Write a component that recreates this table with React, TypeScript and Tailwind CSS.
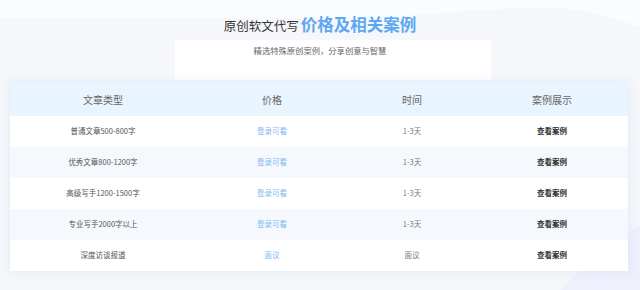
import React from "react";

const rows = [
  { type: "普通文章500-800字", price: "登录可看", time: "1-3天" },
  { type: "优秀文章800-1200字", price: "登录可看", time: "1-3天" },
  { type: "高级写手1200-1500字", price: "登录可看", time: "1-3天" },
  { type: "专业写手2000字以上", price: "登录可看", time: "1-3天" },
  { type: "深度访谈报道", price: "面议", time: "面议" },
];

const font = { fontFamily: '"Noto Sans CJK SC", "Noto Sans", sans-serif' };

export default function App() {
  return (
    <div className="relative h-[290px] w-[640px] overflow-hidden bg-[#f6f7fa]" style={font}>
      {/* decorative background shapes */}
      <svg className="absolute left-0 top-0" width="640" height="290" viewBox="0 0 640 290">
        <path d="M0 0 H640 V28 C600 10 560 6 520 8 C470 10 420 14 380 18 L0 18 Z" fill="#fbfcfe" />
        <path d="M560 290 C600 250 630 230 640 225 V290 Z" fill="#eef0fb" />
      </svg>

      <div className="relative flex flex-col items-center">
        <h2 className="mt-[16px] flex items-baseline leading-none">
          <span className="text-[12.5px] text-[#333]">原创软文代写</span>
          <span className="ml-[2px] text-[16.5px] font-bold text-[#5ea8f3]">价格及相关案例</span>
        </h2>
        <div className="relative left-[13px] mt-[7px] h-[40px] w-[316px] bg-white pr-[26px] pt-[4px] text-center text-[8.3px] text-[#666]">
          精选特殊原创案例，分享创意与智慧
        </div>
      </div>

      <div className="relative mx-[10px] mt-[3px] w-[618px] bg-white shadow-[0_0_10px_rgba(190,215,245,0.45)]">
        <div className="flex h-[33px] items-center bg-[#e8f4fe] text-[10px] text-[#666]">
          <div className="w-[186px] text-center">文章类型</div>
          <div className="w-[152px] text-center">价格</div>
          <div className="w-[128px] text-center">时间</div>
          <div className="w-[152px] text-center">案例展示</div>
        </div>
        {rows.map((r, i) => (
          <div
            key={r.type}
            className={`flex h-[31px] items-center text-[7.5px] ${i % 2 === 1 ? "bg-[#f5f9fd]" : "bg-white"}`}
          >
            <div className="w-[186px] text-center text-[#555]">{r.type}</div>
            <div className="w-[152px] text-center text-[#7fb8f2]">{r.price}</div>
            <div className="w-[128px] text-center text-[#777]">{r.time}</div>
            <div className="w-[152px] text-center font-bold text-[#333]">查看案例</div>
          </div>
        ))}
      </div>
    </div>
  );
}
